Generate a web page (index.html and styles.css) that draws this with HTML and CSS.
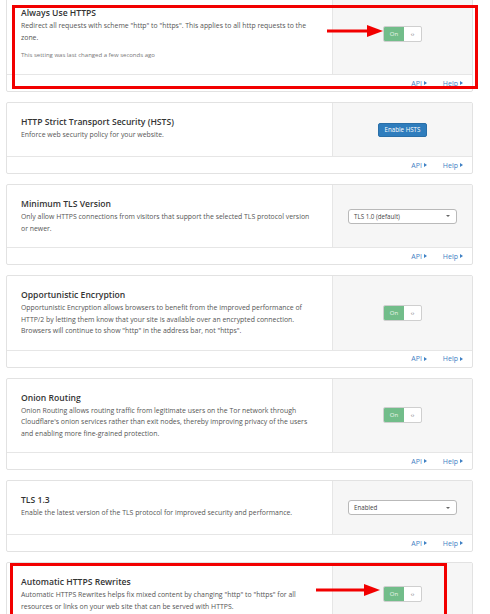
FILE: index.html
```html
<!DOCTYPE html>
<html>
<head>
<meta charset="utf-8">
<link rel="stylesheet" href="styles.css">
</head>
<body>
<div class="page">
  <div class="card first">
    <div class="card-body">
      <div class="info">
        <h3 class="title">Always Use HTTPS</h3>
        <p class="desc">Redirect all requests with scheme "http" to "https". This applies to all http requests to the zone.</p>
        <p class="note">This setting was last changed a few seconds ago</p>
      </div>
      <div class="control">
        <div class="toggle"><span class="on">On</span><span class="knob">‹›</span></div>
      </div>
    </div>
    <div class="card-foot"><span class="link">API<i class="tri"></i></span><span class="link">Help<i class="tri"></i></span></div>
  </div>

  <div class="card">
    <div class="card-body">
      <div class="info">
        <h3 class="title">HTTP Strict Transport Security (HSTS)</h3>
        <p class="desc">Enforce web security policy for your website.</p>
      </div>
      <div class="control">
        <div class="btn">Enable HSTS</div>
      </div>
    </div>
    <div class="card-foot"><span class="link">API<i class="tri"></i></span><span class="link">Help<i class="tri"></i></span></div>
  </div>

  <div class="card">
    <div class="card-body">
      <div class="info">
        <h3 class="title">Minimum TLS Version</h3>
        <p class="desc">Only allow HTTPS connections from visitors that support the selected TLS protocol version or newer.</p>
      </div>
      <div class="control">
        <div class="select"><span>TLS 1.0 (default)</span><i class="caret"></i></div>
      </div>
    </div>
    <div class="card-foot"><span class="link">API<i class="tri"></i></span><span class="link">Help<i class="tri"></i></span></div>
  </div>

  <div class="card">
    <div class="card-body">
      <div class="info">
        <h3 class="title">Opportunistic Encryption</h3>
        <p class="desc">Opportunistic Encryption allows browsers to benefit from the improved performance of HTTP/2 by letting them know that your site is available over an encrypted connection. Browsers will continue to show "http" in the address bar, not "https".</p>
      </div>
      <div class="control">
        <div class="toggle"><span class="on">On</span><span class="knob">‹›</span></div>
      </div>
    </div>
    <div class="card-foot"><span class="link">API<i class="tri"></i></span><span class="link">Help<i class="tri"></i></span></div>
  </div>

  <div class="card">
    <div class="card-body">
      <div class="info">
        <h3 class="title">Onion Routing</h3>
        <p class="desc">Onion Routing allows routing traffic from legitimate users on the Tor network through Cloudflare's onion services rather than exit nodes, thereby improving privacy of the users and enabling more fine-grained protection.</p>
      </div>
      <div class="control">
        <div class="toggle"><span class="on">On</span><span class="knob">‹›</span></div>
      </div>
    </div>
    <div class="card-foot"><span class="link">API<i class="tri"></i></span><span class="link">Help<i class="tri"></i></span></div>
  </div>

  <div class="card">
    <div class="card-body">
      <div class="info">
        <h3 class="title">TLS 1.3</h3>
        <p class="desc">Enable the latest version of the TLS protocol for improved security and performance.</p>
      </div>
      <div class="control">
        <div class="select"><span>Enabled</span><i class="caret"></i></div>
      </div>
    </div>
    <div class="card-foot"><span class="link">API<i class="tri"></i></span><span class="link">Help<i class="tri"></i></span></div>
  </div>

  <div class="card">
    <div class="card-body tall">
      <div class="info">
        <h3 class="title">Automatic HTTPS Rewrites</h3>
        <p class="desc">Automatic HTTPS Rewrites helps fix mixed content by changing "http" to "https" for all resources or links on your web site that can be served with HTTPS.</p>
      </div>
      <div class="control">
        <div class="toggle"><span class="on">On</span><span class="knob">‹›</span></div>
      </div>
    </div>
  </div>
</div>

<div class="redbox box1"></div>
<div class="redbox box2"></div>
<svg class="arrow arrow1" width="58" height="14" viewBox="0 0 58 14"><rect x="0" y="5.5" width="42" height="3" fill="#f20000"/><polygon points="40,1 56,7 40,13" fill="#f20000"/></svg>
<svg class="arrow arrow2" width="66" height="14" viewBox="0 0 66 14"><rect x="0" y="5.5" width="50" height="3" fill="#f20000"/><polygon points="48,1 64,7 48,13" fill="#f20000"/></svg>
</body>
</html>
```

FILE: styles.css
```css
* { box-sizing: border-box; margin: 0; padding: 0; }
html, body { background: #fff; }
body {
  font-family: "Open Sans", "Noto Sans", sans-serif;
  color: #555;
  height: 614px;
  overflow: hidden;
  position: relative;
}
.page {
  display: flex;
  flex-direction: column;
  gap: 10px;
  margin: -7px 0 0 6px;
  width: 467px;
}
.card {
  border: 1px solid #e2e2e2;
  border-radius: 2px;
  background: #fff;
}
.card-body {
  display: flex;
  min-height: 53px;
}
.info {
  flex: 1;
  padding: 13px 15px 13px 14px;
}
.title {
  font-size: 8.6px;
  font-weight: 600;
  color: #333;
  line-height: 12px;
  margin-bottom: 1px;
}
.desc {
  font-size: 6.9px;
  line-height: 11.5px;
  color: #555;
}
.note {
  font-size: 6px;
  line-height: 8px;
  color: #777;
  margin-top: 8px;
  margin-bottom: 2px;
}
.control {
  width: 140px;
  flex: none;
  background: #f6f6f6;
  border-left: 1px solid #e6e6e6;
  display: flex;
  align-items: center;
  justify-content: center;
}
.card-foot {
  border-top: 1px solid #e6e6e6;
  height: 17px;
  display: flex;
  justify-content: flex-end;
  align-items: center;
  gap: 16px;
  padding-right: 9px;
}
.link {
  font-size: 7px;
  color: #3f80c4;
  display: inline-flex;
  align-items: center;
}
.tri {
  display: inline-block;
  margin-left: 2px;
  border-left: 3px solid #3f80c4;
  border-top: 2.5px solid transparent;
  border-bottom: 2.5px solid transparent;
}
.toggle {
  display: flex;
  width: 39px;
  height: 16px;
  border: 1px solid #cfcfcf;
  border-radius: 2px;
  overflow: hidden;
  background: #fff;
}
.toggle .on {
  width: 20px;
  background: #72bd8a;
  color: #e9f6ec;
  font-size: 6px;
  display: flex;
  align-items: center;
  justify-content: center;
}
.toggle .knob {
  flex: 1;
  color: #666;
  font-size: 6px;
  display: flex;
  align-items: center;
  justify-content: center;
}
.btn {
  width: 49px;
  height: 14px;
  background: #2f7dbd;
  border: 1px solid #2a6fa8;
  border-radius: 2px;
  color: #fff;
  font-size: 6.2px;
  display: flex;
  align-items: center;
  justify-content: center;
}
.select {
  width: 109px;
  height: 15px;
  border: 1px solid #b9b9b9;
  border-radius: 3px;
  background: #fff;
  display: flex;
  align-items: center;
  justify-content: space-between;
  padding: 0 6px 0 5px;
  font-size: 6.2px;
  color: #444;
}
.caret {
  border-top: 2.5px solid #666;
  border-left: 2px solid transparent;
  border-right: 2px solid transparent;
}
.redbox {
  position: absolute;
  border: 3px solid #f20000;
}
.box1 { left: 12px; top: 5px; width: 466px; height: 84px; }
.box2 { left: 10px; top: 563px; width: 437px; height: 60px; }
.arrow { position: absolute; }
.arrow1 { left: 327px; top: 24px; }
.arrow2 { left: 316px; top: 583px; }
```
